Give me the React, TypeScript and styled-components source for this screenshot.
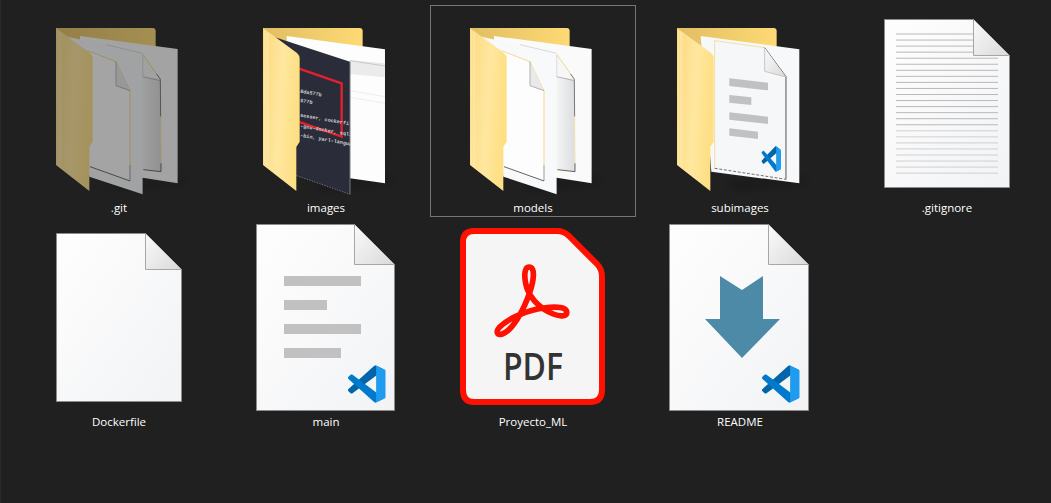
import React from 'react';
import styled, { createGlobalStyle } from 'styled-components';

const GlobalStyle = createGlobalStyle`
    html, body {
        margin: 0;
        height: 100%;
        background-color: #202020;
    }
`

// Both folder and page icons are drawn in tile coordinates (206 x 192)
const Shared = () => (
    <defs>
        <linearGradient id="folderBack" x1="0" x2="1" y1="0" y2="0">
            <stop offset="0" stopColor="#e2bd62" />
            <stop offset="1" stopColor="#fdda75" />
        </linearGradient>
        <linearGradient id="folderFlap" x1="0" x2="1" y1="0" y2="0.25">
            <stop offset="0" stopColor="#fbd97e" />
            <stop offset="0.55" stopColor="#ffe79f" />
            <stop offset="1" stopColor="#fedf84" />
        </linearGradient>
        <linearGradient id="sheet" x1="0" x2="1" y1="0" y2="1">
            <stop offset="0" stopColor="#fefefe" />
            <stop offset="1" stopColor="#f2f3f5" />
        </linearGradient>
        <linearGradient id="fold" x1="0" x2="1" y1="0" y2="1">
            <stop offset="0" stopColor="#fbfbfb" />
            <stop offset="1" stopColor="#d9d9d9" />
        </linearGradient>
        <linearGradient id="inner" x1="0" x2="1" y1="0" y2="0">
            <stop offset="0.55" stopColor="#ffffff" />
            <stop offset="1" stopColor="#dcdddf" />
        </linearGradient>
        <clipPath id="panelClip">
            <polygon points="186,112 411,185 411,583 251,527" />
        </clipPath>
        <filter id="soft">
            <feGaussianBlur stdDeviation="9" />
        </filter>
    </defs>
)

const VsLogo = ({ transform }: { transform: string }) => (
    <g transform={transform}>
        <path fill="#0065a9" d="M96.46 10.8 75.86.88C73.47-.27 70.62.21 68.75 2.08L1.3 63.58c-1.81 1.66-1.81 4.51 0 6.17l5.51 5c1.49 1.35 3.72 1.45 5.32.24L93.36 13.37C96.09 11.3 100 13.25 100 16.67v-.24c0-2.4-1.38-4.59-3.54-5.63Z" />
        <path fill="#007acc" d="M96.46 89.2 75.86 99.12c-2.39 1.15-5.24.67-7.11-1.2L1.3 36.42c-1.81-1.66-1.81-4.51 0-6.17l5.51-5c1.49-1.35 3.72-1.45 5.32-.24L93.36 86.63c2.73 2.07 6.64.12 6.64-3.3v.24c0 2.4-1.38 4.59-3.54 5.63Z" />
        <path fill="#1f9cf0" d="M75.86 99.13c-2.39 1.15-5.24.66-7.11-1.21C71.06 100.22 75 98.59 75 95.33V4.67c0-3.26-3.94-4.89-6.25-2.59C70.62.21 73.47-.27 75.86.87l20.6 9.91c2.16 1.04 3.54 3.23 3.54 5.63v67.17c0 2.4-1.38 4.59-3.54 5.63L75.86 99.13Z" />
    </g>
)

const FolderBack = () => (
    <>
        <polygon points="300,545 515,525 545,550 330,575" fill="#000" opacity="0.14" filter="url(#soft)" />
        <path d="M150 84H440Q449 84 449 94V300H150Z" fill="url(#folderBack)" />
    </>
)

const FolderFlap = () => (
    <>
        <path d="M150 84 252 159Q260 166 260 176V425L250 441V573L150 495Z" fill="url(#folderFlap)" />
        <path d="M155 90V497M160 94V501M165 98V505" stroke="#ffeebb" strokeWidth="2" fill="none" />
    </>
)

const PlainPapers = () => (
    <>
        <polygon points="222,108 515,147 515,550 410,533 222,500" fill="#fafafa" />
        <polygon points="290,145 410,163 463,235 465,515 290,490" fill="url(#inner)" />
        <polygon points="410,163 463,238 410,230" fill="#f7f7f7" />
        <polyline points="290,145 410,163 452,222" fill="none" stroke="#f3d98f" strokeWidth="3" />
        <polyline points="452,222 463,238 464,350" fill="none" stroke="#777" strokeWidth="3" />
        <polyline points="464,350 465,490" fill="none" stroke="#f6e1a6" strokeWidth="3" />
        <polyline points="465,490 465,515 412,509" fill="none" stroke="#444" strokeWidth="2.5" />
        <polyline points="410,165 410,230 463,242" fill="none" stroke="#a8a8a8" strokeWidth="2.5" />
        <polygon points="185,110 410,160 410,583 250,530" fill="#f8f9fa" />
        <polyline points="300,134 410,160" fill="none" stroke="#b9b9b9" strokeWidth="1.5" />
        <polygon points="245,150 330,185 372,272 372,543 252,500" fill="#fdfdfe" />
        <polyline points="245,152 330,185 372,272 372,495" fill="none" stroke="#f4d98c" strokeWidth="3" />
        <polyline points="372,495 372,543" fill="none" stroke="#9c9c9c" strokeWidth="3" />
        <polyline points="372,543 252,500" fill="none" stroke="#444" strokeWidth="2.5" />
        <polygon points="330,185 372,272 330,257" fill="#e9e9e9" />
        <polyline points="330,185 330,257 372,272" fill="none" stroke="#a5a5a5" strokeWidth="2.5" />
    </>
)

const ScreenshotPapers = () => (
    <>
        <polygon points="221,108 516,148 516,550 411,535 221,500" fill="#fdfdfd" />
        <polygon points="411,180 516,190 516,232 411,222" fill="#ebebeb" />
        <polyline points="411,182 516,198" fill="none" stroke="#b5b5b5" strokeWidth="2" />
        <polyline points="411,272 516,290" fill="none" stroke="#e6e6e6" strokeWidth="2" />
        <polyline points="411,292 516,310" fill="none" stroke="#e6e6e6" strokeWidth="2" />
        <polygon points="186,112 411,185 411,583 251,527" fill="#2a2c39" />
        <polyline points="411,185 411,583" fill="none" stroke="#77787c" strokeWidth="3" />
        <polyline points="251,527 411,583" fill="none" stroke="#9a9a9a" strokeWidth="2" strokeDasharray="4 4" />
        <polygon points="230,196 386,250 386,410 230,356" fill="none" stroke="#e5202c" strokeWidth="7" />
        <g clipPath="url(#panelClip)">
            <ScreenCode x={261} y={278} rise={10}>8da577b</ScreenCode>
            <ScreenCode x={261} y={306} rise={10}>577b</ScreenCode>
            <ScreenCode x={261} y={350} rise={10}>sesser, cockerfile</ScreenCode>
            <ScreenCode x={261} y={382} rise={10}>-gnu-docker, sqlite</ScreenCode>
            <ScreenCode x={261} y={410} rise={10}>-bin, yarl-langua</ScreenCode>
        </g>
    </>
)

const ScreenCode = styled.text.attrs<{ x: number; y: number; rise: number }>((p) => ({
    transform: `rotate(${p.rise} ${p.x} ${p.y})`,
}))<{ rise: number }>`
    font-family: "Liberation Mono", monospace;
    font-size: 15.5px;
    font-weight: 700;
    fill: #d0d0d0;
`

const CodePapers = () => (
    <>
        <polygon points="221,108 517,148 517,550 253,515" fill="#f7f8f9" />
        <polygon points="263,122 413,143 477,230 477,538 263,505" fill="#f6f7f9" />
        <polyline points="263,505 263,122 413,143" fill="none" stroke="#f2d993" strokeWidth="2.5" />
        <polyline points="413,143 477,230 477,538" fill="none" stroke="#333" strokeWidth="2.5" />
        <polyline points="263,505 477,538" fill="none" stroke="#555" strokeWidth="2.5" strokeDasharray="9 5" />
        <polygon points="413,143 477,231 413,214" fill="url(#fold)" />
        <polyline points="413,143 413,214 477,231" fill="none" stroke="#b0b0b0" strokeWidth="2" />
        <polygon points="307,235 423,248 423,271 307,258" fill="#c0c1c0" />
        <polygon points="307,285 373,292 373,315 307,308" fill="#c0c1c0" />
        <polygon points="307,337 423,350 423,372 307,359" fill="#c0c1c0" />
        <polygon points="307,385 393,395 393,417 307,407" fill="#c0c1c0" />
        <VsLogo transform="translate(404 433) scale(.58 .76) skewY(6)" />
    </>
)

const Folder = ({ children, dim }: { children: React.ReactNode; dim?: boolean }) => (
    <Stage $dim={dim} viewBox="0 0 206 192">
        <Shared />
        <g transform="translate(-10 -5) scale(.3333)">
            <FolderBack />
            {children}
            <FolderFlap />
        </g>
    </Stage>
)

// Flat page with a turned corner
const PageSheet = ({ x, y, w, h, fold }: { x: number; y: number; w: number; h: number; fold: number }) => {
    const r = x + w;
    const b = y + h;
    return (
        <>
            <path d={`M${x} ${y}H${r - fold}L${r} ${y + fold}V${b}H${x}Z`} fill="url(#sheet)" stroke="#8c8c8c" strokeWidth="1" />
            <path d={`M${r - fold} ${y}L${r} ${y + fold}H${r - fold}Z`} fill="url(#fold)" />
            <path d={`M${r - fold} ${y}V${y + fold}H${r}`} fill="none" stroke="#a6a6a6" strokeWidth="1" />
        </>
    )
}

const RULED = Array.from({ length: 24 }, (_, i) => i);

const TextFile = () => (
    <Stage viewBox="0 0 206 192">
        <Shared />
        <PageSheet x={40.5} y={14.5} w={125} h={168} fold={36} />
        {RULED.map((i) => (
            <rect key={i} x={52} y={28.5 + i * 6.05} width={i < 4 ? 77 : 102} height={1} fill={i < 16 ? '#b9b9b9' : '#d0d0d0'} />
        ))}
    </Stage>
)

const BlankFile = () => (
    <Stage viewBox="0 0 206 192">
        <Shared />
        <PageSheet x={40.5} y={14.5} w={125} h={168} fold={36} />
    </Stage>
)

const CodeFile = () => (
    <Stage viewBox="0 0 206 192">
        <Shared />
        <PageSheet x={33.5} y={5.5} w={138} h={186} fold={40} />
        <rect x={61} y={57} width={77} height={10} fill="#c0c1c0" />
        <rect x={61} y={81} width={43} height={10} fill="#c0c1c0" />
        <rect x={61} y={105} width={77} height={10} fill="#c0c1c0" />
        <rect x={61} y={129} width={57} height={10} fill="#c0c1c0" />
        <VsLogo transform="translate(125 146.5) scale(.375 .37)" />
    </Stage>
)

const PdfFile = () => (
    <Stage viewBox="0 0 206 192">
        <path d="M44 12H127Q134 12 139 17L167 45Q172 50 172 58V171Q172 183 160 183H44Q33 183 33 171V23Q33 12 44 12Z" fill="#f5f5f5" stroke="#ff1000" strokeWidth="6" />
        <g transform="translate(20 1) scale(.3333)">
            <path d="M237 141C224 141 222 165 227 190 233 225 262 262 310 282 335 292 352 288 350 275 348 262 320 258 280 264 235 270 175 295 150 320 135 336 142 347 157 342 185 333 220 275 240 215 250 185 258 141 237 141Z" fill="none" stroke="#ff1000" strokeWidth="17" />
        </g>
        <PdfMark x={73} y={161} textLength={60} lengthAdjust="spacingAndGlyphs">PDF</PdfMark>
    </Stage>
)

const PdfMark = styled.text`
    font-family: "Open Sans", sans-serif;
    font-size: 38px;
    font-weight: 600;
    fill: #333333;
`

const MarkdownFile = () => (
    <Stage viewBox="0 0 206 192">
        <Shared />
        <PageSheet x={32.5} y={5.5} w={139} h={186} fold={40} />
        <polygon points="83,57 105,71 126,57 126,100 143,100 105,139 68,100 83,100" fill="#4d8aa8" />
        <VsLogo transform="translate(125 146.5) scale(.375 .37)" />
    </Stage>
)

const ITEMS: { name: string; icon: React.ReactNode; selected?: boolean }[] = [
    { name: '.git', icon: <Folder dim><PlainPapers /></Folder> },
    { name: 'images', icon: <Folder><ScreenshotPapers /></Folder> },
    { name: 'models', icon: <Folder><PlainPapers /></Folder>, selected: true },
    { name: 'subimages', icon: <Folder><CodePapers /></Folder> },
    { name: '.gitignore', icon: <TextFile /> },
    { name: 'Dockerfile', icon: <BlankFile /> },
    { name: 'main', icon: <CodeFile /> },
    { name: 'Proyecto_ML', icon: <PdfFile /> },
    { name: 'README', icon: <MarkdownFile /> },
];

export default function App() {
    return (
        <>
            <GlobalStyle />
            <FileGrid>
                {ITEMS.map((item) => (
                    <Tile key={item.name} $selected={item.selected}>
                        {item.icon}
                        <Name>{item.name}</Name>
                    </Tile>
                ))}
            </FileGrid>
        </>
    )
}

const FileGrid = styled.div`
    box-sizing: border-box;
    display: grid;
    grid-template-columns: repeat(5, 206px);
    grid-auto-rows: 212px;
    align-content: start;
    column-gap: 1px;
    row-gap: 2px;
    min-height: 100vh;
    padding: 5px 0 0 15px;
    border-left: 1px solid #2a2a2a;
`

const Tile = styled.div<{ $selected?: boolean }>`
    display: flex;
    flex-direction: column;
    align-items: center;
    outline: ${(p) => (p.$selected ? '1px solid #767676' : 'none')};
    outline-offset: -1px;
`

const Stage = styled.svg<{ $dim?: boolean }>`
    display: block;
    width: 206px;
    height: 192px;
    flex: none;
    opacity: ${(p) => (p.$dim ? 0.6 : 1)};
`

const Name = styled.span`
    margin-top: 3px;
    color: #ffffff;
    font-family: "Open Sans", sans-serif;
    font-size: 11.5px;
    line-height: 16px;
`
